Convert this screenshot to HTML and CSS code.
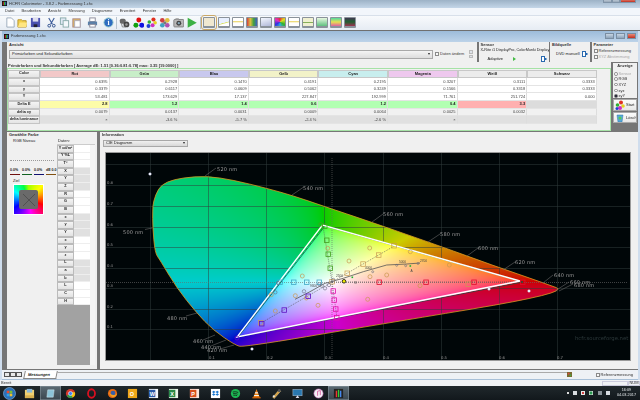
FILE: index.html
```html
<!DOCTYPE html>
<html lang="de">
<head>
<meta charset="utf-8">
<title>HCFR Colorimeter</title>
<link rel="stylesheet" href="styles.css">
</head>
<body>
<div class="app">
  <header class="titlebar">
    <svg class="appicon" viewBox="0 0 6 6"><rect width="6" height="6" fill="#111"/><rect x="1" y="1" width="1" height="4" fill="#e33"/><rect x="2.5" y="1" width="1" height="4" fill="#3c3"/><rect x="4" y="1" width="1" height="4" fill="#48e"/></svg>
    <span class="titletext">HCFR Colorimeter - 3.8.2 - Farbmessung 1.chc</span>
    <div class="winctl"><i class="wb"></i><i class="wb"></i><i class="wb close"></i></div>
  </header>
  <nav class="menubar">
    <span>Datei</span><span>Bearbeiten</span><span>Ansicht</span><span>Messung</span><span>Diagramme</span><span>Erweitert</span><span>Fenster</span><span>Hilfe</span>
  </nav>
  <div class="toolbar">
    <svg class="tool" viewBox="0 0 12 12"><path d="M2 1h5l3 3v7H2z" fill="#fff" stroke="#9ab"/></svg>
    <svg class="tool" viewBox="0 0 12 12"><path d="M1 3h4l1 1h4v7H1z" fill="#f2cf4a" stroke="#b8942a"/><path d="M3 6h8l-1 5H1z" fill="#ffe680"/></svg>
    <svg class="tool" viewBox="0 0 12 12"><path d="M1 1h10v10H1z" fill="#4a50b0"/><path d="M3 1h6v4H3z" fill="#dde"/><path d="M4 8h4v3H4z" fill="#223"/></svg>
    <svg class="tool gapl" viewBox="0 0 12 12"><path d="M3 1l4 7M9 1L5 8" stroke="#3a5a9a" stroke-width="1.2" fill="none"/><circle cx="3.5" cy="9.5" r="1.5" fill="none" stroke="#2a4a8a"/><circle cx="8.5" cy="9.5" r="1.5" fill="none" stroke="#2a4a8a"/></svg>
    <svg class="tool" viewBox="0 0 12 12"><rect x="1.5" y="1" width="6" height="7" fill="#dfe8f4" stroke="#8aa"/><rect x="4.5" y="4" width="6" height="7" fill="#f4f8fc" stroke="#8aa"/></svg>
    <svg class="tool" viewBox="0 0 12 12"><rect x="2" y="2" width="8" height="9" fill="#e0b860" stroke="#a88"/><rect x="4" y="4" width="6" height="7" fill="#fff" stroke="#aab"/></svg>
    <svg class="tool gapl" viewBox="0 0 12 12"><rect x="3" y="1" width="6" height="4" fill="#fff" stroke="#889"/><rect x="1" y="5" width="10" height="4" fill="#5a7fa8"/><rect x="3" y="8" width="6" height="3" fill="#fff" stroke="#889"/></svg>
    <svg class="tool gapl" viewBox="0 0 12 12"><circle cx="6" cy="6" r="5" fill="#2e6cc0" stroke="#9cc"/><text x="6" y="9" class="helpq">i</text></svg>
    <i class="sep"></i>
    <svg class="tool big" viewBox="0 0 14 14"><rect x="1" y="2" width="7" height="6" rx="2" fill="#666"/><circle cx="9" cy="9" r="3.5" fill="#444"/><circle cx="9" cy="9" r="1.5" fill="#999"/><path d="M3 8l1 4h4" fill="none" stroke="#777"/></svg>
    <svg class="tool big" viewBox="0 0 14 14"><circle cx="7" cy="3.5" r="3" fill="#e01010"/><circle cx="3.5" cy="10" r="3" fill="#10a010"/><circle cx="10.5" cy="10" r="3" fill="#1010e0"/></svg>
    <svg class="tool big" viewBox="0 0 14 14"><circle cx="9" cy="3" r="2.5" fill="#e03020"/><circle cx="11" cy="7" r="2.2" fill="#e8d020"/><circle cx="4" cy="6" r="2.2" fill="#30b030"/><circle cx="8" cy="10" r="2.4" fill="#d030c0"/><circle cx="3" cy="11" r="2.4" fill="#2040d0"/></svg>
    <svg class="tool big" viewBox="0 0 14 14"><circle cx="4" cy="4" r="2.8" fill="#d04040"/><circle cx="10" cy="4" r="2.8" fill="#e0c040"/><circle cx="4" cy="10" r="2.8" fill="#40a0c0"/><circle cx="10" cy="10" r="2.8" fill="#b050b0"/><circle cx="7" cy="7" r="2" fill="#7a7a7a"/></svg>
    <svg class="tool big" viewBox="0 0 14 14"><rect x="1" y="3" width="12" height="9" rx="1" fill="#b8b8b8" stroke="#777"/><circle cx="7" cy="7.5" r="3" fill="#444"/><circle cx="7" cy="7.5" r="1.4" fill="#8ab"/><rect x="3" y="1.5" width="4" height="2" fill="#999"/></svg>
    <svg class="tool big" viewBox="0 0 14 14"><path d="M2 1l11 6-11 6z" fill="#3cb043"/></svg>
    <i class="sep"></i>
    <div class="mon active s1"></div><div class="mon s2"></div><div class="mon s3"></div><div class="mon s4"></div><div class="mon s5"></div><div class="mon s6"></div><div class="mon s3"></div><div class="mon s7"></div><div class="mon s8"></div><div class="mon s9"></div><div class="mon s10"></div>
  </div>

  <main class="mdi">
    <div class="childtitle">
      <svg class="appicon" viewBox="0 0 6 6"><rect width="6" height="6" fill="#111"/><rect x="1" y="1" width="1" height="4" fill="#e33"/><rect x="2.5" y="1" width="1" height="4" fill="#3c3"/><rect x="4" y="1" width="1" height="4" fill="#48e"/></svg>
      <span>Farbmessung 1.chc</span>
      <div class="childctl"><i></i><i></i><i class="close"></i></div>
    </div>
    <div class="childbody">
      <section class="toprow">
        <div class="group ansicht">
          <b class="ghead">Ansicht</b>
          <div class="ansichtrow">
            <div class="combo wide"><span>Primärfarben und Sekundärfarben</span><i class="arrow"></i></div>
            <label class="chk"><i class="box"></i>Daten ändern</label>
            <div class="spin"><i></i><i></i></div>
          </div>
        </div>
        <div class="group sensor">
          <b class="ghead">Sensor</b>
          <div class="sline">X-Rite i1 DisplayPro, ColorMunki Display</div>
          <div class="sline2"><span>Adaptive</span><i class="play"></i><svg class="doc" viewBox="0 0 6 6"><rect x="0.5" y="0.5" width="3" height="5" fill="#fff" stroke="#2a6ab0"/><path d="M3.5 2h2v2h-2z" fill="#2a6ab0"/></svg></div>
        </div>
        <div class="group quelle">
          <b class="ghead">Bildquelle</b>
          <div class="sline3"><span>DVD manuell</span><svg class="doc" viewBox="0 0 6 6"><rect x="0.5" y="0.5" width="3" height="5" fill="#fff" stroke="#2a6ab0"/><path d="M3.5 2h2v2h-2z" fill="#2a6ab0"/></svg></div>
        </div>
        <div class="group param">
          <b class="ghead">Parameter</b>
          <label class="chk p1"><i class="box"></i>Referenzmessung</label>
          <label class="chk p2"><i class="box"></i>XYZ Abstimmung</label>
        </div>
      </section>

      <section class="midrow">
        <div class="tablepanel">
          <div class="tphead"><b>Primärfarben und Sekundärfarben [ Average dE: 1.51 [0.36:0.81:0.78] max: 3.35 [19.0000] ]</b></div>
          <div class="greenbox">
            <div class="gridwrap">
              <div class="grid">
                <div class="rh">Color</div><div class="ch rot">Rot</div><div class="ch gruen">Grün</div><div class="ch blau">Blau</div><div class="ch gelb">Gelb</div><div class="ch cyan">Cyan</div><div class="ch magenta">Magenta</div><div class="ch">Weiß</div><div class="ch">Schwarz</div>
                <div class="rh">x</div><div class="c">0.6395</div><div class="c">0.2928</div><div class="c">0.1470</div><div class="c">0.4191</div><div class="c">0.2195</div><div class="c">0.3207</div><div class="c">0.3111</div><div class="c">0.3333</div>
                <div class="rh">y</div><div class="c">0.3379</div><div class="c">0.6117</div><div class="c">0.0609</div><div class="c">0.5062</div><div class="c">0.3249</div><div class="c">0.1566</div><div class="c">0.3318</div><div class="c">0.3333</div>
                <div class="rh">Y</div><div class="c">53.481</div><div class="c">173.629</div><div class="c">17.137</div><div class="c">227.847</div><div class="c">192.999</div><div class="c">71.761</div><div class="c">251.724</div><div class="c">0.000</div>
                <div class="rh">Delta E</div><div class="c de dy">2.8</div><div class="c de dg">1.2</div><div class="c de dg">1.4</div><div class="c de dg">0.6</div><div class="c de dg">1.2</div><div class="c de dg">0.4</div><div class="c de dr">3.3</div><div class="c de dn"></div>
                <div class="rh">delta xy</div><div class="c l1">0.0079</div><div class="c l1">0.0137</div><div class="c l1">0.0031</div><div class="c l1">0.0009</div><div class="c l1">0.0064</div><div class="c l1">0.0025</div><div class="c l1">0.0032</div><div class="c l1"></div>
                <div class="rh">delta luminance</div><div class="c l2">×</div><div class="c l2">-3.6 %</div><div class="c l2">-5.7 %</div><div class="c l2">-2.4 %</div><div class="c l2">-2.6 %</div><div class="c l2">×</div><div class="c l2"></div><div class="c l2"></div>
              </div>
              <div class="vscroll"></div>
            </div>
            <div class="hscroll"></div>
          </div>
        </div>
        <aside class="anzeige">
          <div class="anzbox">
            <b class="ghead ctr">Anzeige</b>
            <label class="rad dis"><i></i>Sensor</label>
            <label class="rad"><i></i>RGB</label>
            <label class="rad"><i></i>XYZ</label>
            <label class="rad g2"><i></i>xyz</label>
            <label class="rad on"><i></i>xyY</label>
          </div>
          <div class="abtn"><svg class="abi" viewBox="0 0 10 10"><circle cx="6" cy="2.5" r="2" fill="#e03020"/><circle cx="8" cy="6" r="1.8" fill="#e8d020"/><circle cx="2.5" cy="5" r="1.8" fill="#30b030"/><circle cx="5" cy="8" r="2" fill="#d030c0"/><circle cx="2" cy="8.5" r="1.5" fill="#2040d0"/></svg><span>Start</span></div>
          <div class="abtn"><svg class="abi" viewBox="0 0 10 10"><path d="M2 2h6l-1 7H3z" fill="#58a8d8" stroke="#2a78a8" stroke-width=".5"/><circle cx="5" cy="5" r="1.6" fill="#5c5"/></svg><span>Löschen</span></div>
        </aside>
      </section>

      <section class="lowrow">
        <div class="gewaehlt">
          <b class="ghead">Gewählte Farbe</b>
          <div class="gbody">
            <div class="gleft">
              <div class="rgbn">RGB Niveau</div>
              <div class="dotline"></div>
              <div class="pcts"><span class="pr">0.0%</span><span class="pg">0.0%</span><span class="pb">0.0%</span><span class="po">dE 0.0</span></div>
              <div class="ziel">Ziel</div>
              <div class="swatch"><div class="swinner"><svg viewBox="0 0 16 16"><path d="M2 2l12 12M14 2L2 14" stroke="#4a4a4a" stroke-width=".8"/></svg></div></div>
            </div>
            <div class="gdata">
              <div class="dlabel">Daten:</div>
              <div class="dwrap">
                <div class="dcol">
                  <div class="dgrid">
                    <div class="dh">Y cd/m²</div><div class="dv"></div><div class="dh">Y %L</div><div class="dv"></div><div class="dh">T°</div><div class="dv"></div>
                    <div class="dh">X</div><div class="dv g"></div><div class="dh">Y</div><div class="dv g"></div><div class="dh">Z</div><div class="dv g"></div>
                    <div class="dh">R</div><div class="dv"></div><div class="dh">G</div><div class="dv"></div><div class="dh">B</div><div class="dv"></div>
                    <div class="dh">x</div><div class="dv g"></div><div class="dh">y</div><div class="dv g"></div><div class="dh">Y</div><div class="dv g"></div>
                    <div class="dh">x</div><div class="dv"></div><div class="dh">y</div><div class="dv"></div><div class="dh">z</div><div class="dv"></div>
                    <div class="dh">L</div><div class="dv g"></div><div class="dh">a</div><div class="dv g"></div><div class="dh">b</div><div class="dv g"></div>
                    <div class="dh">L</div><div class="dv"></div><div class="dh">C</div><div class="dv"></div><div class="dh">H</div><div class="dv"></div>
                  </div>
                  <div class="dfill"></div>
                </div>
                <div class="dscroll"></div>
              </div>
            </div>
          </div>
        </div>
        <div class="info">
          <b class="ghead">Information</b>
          <div class="combo cie"><span>CIE Diagramm</span><i class="arrow"></i></div>
          <div class="chart">
            <canvas id="cie" width="524" height="207"></canvas>
            <svg class="overlay" viewBox="106 153 524 207">
              <g class="lead">
                <path d="M205 176l11-8M292 195l11-7.500M372 222l11-8M428 242l12-8M467 256l11-8M503 270l12-8M543 283l10-8M555 291l14-9M559 291l14-7M152 228l-7 1.500M197 313l-11 3M215 335l-12 5M226 340l-15 6M234 345l-14 4"/>
              </g>
              <g class="nm">
                <text x="217" y="170.500">520 nm</text><text x="303" y="189.500">540 nm</text><text x="383" y="216">560 nm</text><text x="440" y="236">580 nm</text><text x="478" y="250">600 nm</text><text x="515" y="264">620 nm</text><text x="554" y="277">640 nm</text><text x="570" y="284">660 nm</text><text x="574" y="286.500">680 nm</text>
                <text x="123" y="234">500 nm</text><text x="167" y="320">480 nm</text><text x="193" y="343">460 nm</text><text x="201" y="349">440 nm</text><text x="207" y="351.500">420 nm</text>
              </g>
              <g class="ax">
                <text x="107" y="184">0.8</text><text x="107" y="205">0.7</text><text x="107" y="226">0.6</text><text x="107" y="246">0.5</text><text x="107" y="267">0.4</text><text x="107" y="287">0.3</text><text x="107" y="308">0.2</text><text x="107" y="328">0.1</text>
                <text x="209" y="359">0.1</text><text x="267" y="359">0.2</text><text x="325" y="359">0.3</text><text x="383" y="359">0.4</text><text x="441" y="359">0.5</text><text x="499" y="359">0.6</text><text x="557" y="359">0.7</text>
              </g>
              <path class="dots light" d="M106 282.500H628M332 158V360"/>
              <path class="dots" d="M332 282L323 226M332 282L261 323M332 282L396 245M332 282L337 318M332 282L523 282"/>
              <path class="meas" d="M325 226L238 337L523 282Z"/>
              <path class="target" d="M322.500 225L237 337L520 281Z"/>
              <path class="locus" d="M295 299.300L310 291.700L325 283.300L343.300 278.300L363.300 271.700L386.700 265L406.700 264L420 263"/>
              <g class="tan">
                <circle cx="327.700" cy="248.300" r="2"/><circle cx="275.300" cy="311" r="2"/><circle cx="306.300" cy="298" r="2"/><circle cx="295.300" cy="295.700" r="2"/><circle cx="271.300" cy="294.700" r="2"/><circle cx="318" cy="305.300" r="2"/><circle cx="302.300" cy="276" r="2"/><circle cx="369.700" cy="248" r="2"/><circle cx="349" cy="261" r="2"/><circle cx="410.300" cy="251.700" r="2"/><circle cx="386.700" cy="275" r="2"/><circle cx="370" cy="276.700" r="2"/><circle cx="367.700" cy="299.300" r="2"/><circle cx="420" cy="285.700" r="2"/><circle cx="449.300" cy="265" r="2"/>
                <rect x="258.500" y="320.500" width="4.500" height="4.500"/><rect x="391.800" y="243.500" width="4.500" height="4.500"/><rect x="376.500" y="252.800" width="4.500" height="4.500"/><rect x="360.800" y="261.800" width="4.500" height="4.500"/><rect x="345" y="271" width="4.500" height="4.500"/><rect x="329.800" y="279.500" width="4.500" height="4.500"/><rect x="466" y="282" width="4.500" height="4.500"/>
              </g>
              <g class="sq grn"><rect x="324.500" y="238" width="4.500" height="4.500"/><rect x="326" y="252" width="4.500" height="4.500"/><rect x="328" y="266" width="4.500" height="4.500"/><rect x="322.500" y="224" width="4.500" height="4.500"/><circle cx="320.700" cy="224.300" r="1.800"/></g>
              <g class="sq cyn"><rect x="277.800" y="280" width="4.500" height="4.500"/><rect x="291.500" y="280" width="4.500" height="4.500"/><rect x="304.500" y="280" width="4.500" height="4.500"/><rect x="317" y="280" width="4.500" height="4.500"/></g>
              <g class="sq pur"><rect x="259.500" y="321.500" width="4.500" height="4.500"/><rect x="282" y="307.800" width="4.500" height="4.500"/><rect x="306" y="294" width="4.500" height="4.500"/><circle cx="237" cy="338" r="2"/></g>
              <g class="sq mag"><rect x="331" y="288.800" width="4.500" height="4.500"/><rect x="332" y="297.800" width="4.500" height="4.500"/><rect x="333.500" y="306.800" width="4.500" height="4.500"/><rect x="334.500" y="315.500" width="4.500" height="4.500"/></g>
              <g class="sq red"><rect x="377" y="280" width="4.500" height="4.500"/><rect x="423.800" y="280" width="4.500" height="4.500"/><rect x="471.800" y="280" width="4.500" height="4.500"/><rect x="520.500" y="280" width="4.500" height="4.500"/></g>
              <g class="gc"><circle cx="278" cy="283" r="1.700"/><circle cx="275.300" cy="292.300" r="1.700"/><circle cx="304" cy="291.300" r="1.700"/><circle cx="319.300" cy="284.300" r="1.700"/><circle cx="321.800" cy="285.700" r="1.700"/><circle cx="325" cy="288.300" r="1.700"/><circle cx="329" cy="285" r="1.700"/><circle cx="333.300" cy="280" r="1.700"/><circle cx="372.700" cy="271.700" r="1"/><circle cx="396.700" cy="265.300" r="1"/><circle cx="405.700" cy="265.700" r="1"/><circle cx="418" cy="263.500" r="1"/></g>
              <circle class="yel" cx="344" cy="281.300" r="1.800"/>
              <rect class="gd" x="351.500" y="276.500" width="1.600" height="1.600"/><rect class="gd" x="409.500" y="265.200" width="1.600" height="1.600"/>
              <g class="wt"><circle cx="150" cy="174" r="1.300"/><circle cx="252" cy="349" r="1.300"/><circle cx="489" cy="289" r="1.300"/><circle cx="529" cy="291" r="1.300"/></g>
              <g class="kt"><text x="310" y="287">9300</text><text x="336" y="277">2500</text><text x="365" y="269">4000</text><text x="399" y="263">5000</text><text x="420" y="262">2700</text><text x="410.500" y="272">A</text><text x="354.500" y="283.500">B</text></g>
              <text class="mark" x="575" y="340">hcfr.sourceforge.net</text>
            </svg>
          </div>
        </div>
      </section>
    </div>
    <div class="tabrow">
      <div class="tnav"><i></i><i></i><i></i></div>
      <div class="tab">Messungen</div>
      <div class="tabrest"></div>
      <svg class="tinyicon" viewBox="0 0 6 6"><rect width="6" height="6" fill="#7a6a30"/><rect x="1" y="1" width="2" height="2" fill="#d44"/><rect x="3" y="3" width="2" height="2" fill="#4a4"/></svg>
      <label class="chk tchk"><i class="box"></i>Referenzmessung</label>
    </div>
  </main>

  <footer class="statusbar"><span>Bereit</span><span class="cell blank"></span><span class="cell">NUM</span></footer>

  <div class="taskbar">
    <div class="start"><svg viewBox="0 0 14 14"><circle cx="7" cy="7" r="6.500" fill="#2a70b8" stroke="#9cc4e8" stroke-width=".6"/><rect x="4" y="4" width="2.800" height="2.800" fill="#e84a30"/><rect x="7.200" y="4" width="2.800" height="2.800" fill="#7ac030"/><rect x="4" y="7.200" width="2.800" height="2.800" fill="#30a0e8"/><rect x="7.200" y="7.200" width="2.800" height="2.800" fill="#f0c030"/></svg></div>
    <div class="ti"><svg viewBox="0 0 12 12"><rect x="1" y="2" width="10" height="9" fill="#f0d070"/><rect x="3" y="1" width="6" height="4" fill="#8ab8d8"/><rect x="1" y="8" width="10" height="3" fill="#d8b050"/></svg></div>
    <div class="ti act"><svg viewBox="0 0 12 12"><path d="M3 2h7l-1 8H2z" fill="#8cc4d8" stroke="#d8e8f0" stroke-width=".5"/></svg></div>
    <div class="ti"><svg viewBox="0 0 12 12"><circle cx="6" cy="6" r="5" fill="#d8392b"/><path d="M6 6L1.700 8.500A5 5 0 0 0 8.500 10.300z" fill="#2e9e4a"/><path d="M6 6l2.500 4.300A5 5 0 0 0 10.800 4.500H6z" fill="#f4c20d"/><circle cx="6" cy="6" r="2.200" fill="#4285f4" stroke="#fff" stroke-width=".6"/></svg></div>
    <div class="ti"><svg viewBox="0 0 12 12"><ellipse cx="6" cy="6" rx="3.800" ry="4.600" fill="none" stroke="#d81020" stroke-width="2"/></svg></div>
    <div class="ti"><svg viewBox="0 0 12 12"><circle cx="6" cy="6" r="5" fill="#e86a14"/><circle cx="6.500" cy="5.500" r="2.600" fill="#3a5fa8"/><path d="M2 3c1 5 6 6 9 3-1 5-8 6-9-3z" fill="#f4a020"/></svg></div>
    <div class="ti"><svg viewBox="0 0 12 12"><rect x="1" y="1" width="10" height="10" fill="#f0a818"/><text x="3" y="9" class="tl">O</text></svg></div>
    <div class="ti"><svg viewBox="0 0 12 12"><rect x="1" y="1" width="10" height="10" fill="#f4f8fc"/><rect x="1" y="2" width="7" height="8" fill="#2a5aa8"/><text x="2" y="8.500" class="tl">W</text></svg></div>
    <div class="ti"><svg viewBox="0 0 12 12"><rect x="1" y="1" width="10" height="10" fill="#e8f4e8"/><rect x="1" y="2" width="7" height="8" fill="#2a8a48"/><text x="2.500" y="8.500" class="tl">X</text></svg></div>
    <div class="ti"><svg viewBox="0 0 12 12"><rect x="1" y="1" width="10" height="10" fill="#fbe4dc"/><rect x="1" y="2" width="7" height="8" fill="#d8501e"/><text x="2.500" y="8.500" class="tl">P</text></svg></div>
    <div class="ti"><svg viewBox="0 0 12 12"><rect x="1" y="1" width="10" height="10" fill="#fff"/><path d="M4 3l2 1.300L4 5.600 2.200 4.300zM8 3l1.800 1.300L8 5.600 6 4.300zM4 5.800l2 1.300-2 1.300-1.800-1.300zM8 5.800l1.800 1.300L8 8.400 6 7.100z" fill="#1a78d0"/></svg></div>
    <div class="ti"><svg viewBox="0 0 12 12"><circle cx="6" cy="6" r="5" fill="#1db954"/><path d="M3 4.500c2-.7 4-.5 6 .5M3.300 6.300c1.800-.5 3.400-.3 5 .5M3.700 8c1.400-.4 2.800-.2 4 .4" stroke="#111" stroke-width=".8" fill="none"/></svg></div>
    <div class="ti"><svg viewBox="0 0 12 12"><path d="M6 1l3.500 9h-7z" fill="#f08010"/><path d="M4.600 4.500h2.800l.5 1.500H4.100zM3.600 7.500h4.800l.5 1.300H3.100z" fill="#f4f4f4"/><rect x="1.500" y="10" width="9" height="1.300" fill="#e06808"/></svg></div>
    <div class="ti"><svg viewBox="0 0 12 12"><path d="M2 10l7-8 1.500 1.500-7 8z" fill="#d8a040" stroke="#f4e0a0" stroke-width=".5"/><circle cx="9" cy="3" r="1.600" fill="#555"/><circle cx="3" cy="9" r="1.200" fill="#e8e8e8"/></svg></div>
    <div class="ti"><svg viewBox="0 0 12 12"><rect x="1" y="1.500" width="10" height="7" fill="#2a78b0" stroke="#bcd" stroke-width=".5"/><path d="M4 11l2-3 2 3z" fill="#dde"/></svg></div>
    <div class="ti"><svg viewBox="0 0 12 12"><circle cx="6" cy="6" r="5" fill="#f4f0f4" stroke="#d070c0" stroke-width=".6"/><path d="M5 8.500V3.500l3-.7v5" fill="none" stroke="#d04090" stroke-width=".8"/></svg></div>
    <div class="ti act"><svg viewBox="0 0 12 12"><rect x="1" y="1" width="10" height="10" fill="#222"/><rect x="3" y="3" width="1.500" height="7" fill="#e33"/><rect x="5.300" y="2" width="1.500" height="8" fill="#3c3"/><rect x="7.600" y="3" width="1.500" height="7" fill="#48e"/></svg></div>
    <div class="tray">
      <i class="tr up"></i><i class="tr wh"></i><i class="tr rd"></i><i class="tr gn"></i><i class="tr gy"></i><i class="tr wh"></i>
      <div class="clock"><span>16:09</span><span>04.03.2017</span></div>
    </div>
  </div>
</div>
<script src="chart.js"></script>
</body>
</html>
```

FILE: styles.css
```css
* { box-sizing: border-box; }
html, body { margin: 0; padding: 0; }
body { width: 640px; height: 400px; overflow: hidden; font: 4px/1 "Liberation Sans", Arial, sans-serif; color: #222; background: #fff; }
i { display: block; font-style: normal; }
.app { width: 640px; height: 400px; display: flex; flex-direction: column; filter: blur(.3px); }

.titlebar { height: 8px; flex: none; display: flex; align-items: center; gap: 2px; padding: 0 2px 1px; background: linear-gradient(#9db2c6, #c4d6e8); }
.appicon { width: 5px; height: 5px; flex: none; }
.titletext { color: #333; }
.winctl { margin-left: auto; margin-top: -2px; display: flex; align-self: flex-start; padding-right: 2px; }
.wb { width: 8.500px; height: 5px; background: linear-gradient(#c8d4e0, #98a8b8); border: .5px solid #8094a8; }
.wb.close { width: 16px; background: linear-gradient(#e89080, #c03020); }

.menubar { height: 6.500px; flex: none; display: flex; align-items: center; gap: 7.200px; padding-left: 5px; background: #f2f6fb; color: #333; }
.toolbar { height: 15.500px; flex: none; display: flex; align-items: center; gap: 1.800px; padding-left: 4.500px; background: linear-gradient(#f8fafc, #e6ecf3); border-top: .5px solid #d8e0ea; }
.tool { width: 11px; height: 11px; flex: none; }
.tool.big { width: 11.600px; height: 11.600px; }
.tool.gapl { margin-left: 3px; }
.helpq { font: bold 8px "Liberation Serif", serif; fill: #fff; text-anchor: middle; }
.sep { width: 1px; height: 12px; background: #b8c4d0; margin: 0 .3px; }
.mon { width: 12.200px; height: 11px; flex: none; border: 1px solid #8a929a; border-bottom-width: 2px; border-radius: 1px; background: #fff; }
.mon.active { outline: 1px solid #c9a868; outline-offset: 1px; background: #f0e8d0; margin-right: 1px; }
.s1 { background: linear-gradient(135deg, #e8e8e0, #c8c0a0); }
.s2 { background: linear-gradient(165deg, #e8f0ff 55%, #d8e060 60%, #fff 70%); }
.s3 { background: linear-gradient(#fff 40%, #e8d050 45%, #fff 60%); }
.s4 { background: linear-gradient(90deg, #d04040, #e0c040, #40a040, #4060c0); }
.s5 { background: linear-gradient(165deg, #f4f8ff, #b0b8d8); }
.s6 { background: conic-gradient(#e03030, #e0e020, #30b030, #30b0e0, #3030e0, #e030c0, #e03030); }
.s7 { background: linear-gradient(#f0f0d0 50%, #70a040 55%, #f0f0d0 62%); }
.s8 { background: linear-gradient(#e8f8e0, #60c080); }
.s9 { background: linear-gradient(#50d8a0, #e8e050, #e060a0); }
.s10 { background: linear-gradient(#f070d0, #f4b0c0, #e8e060); }
.mon:last-child { background: linear-gradient(#403850, #206030, #a03050); }

.mdi { flex: 1; min-height: 0; display: flex; flex-direction: column; padding: 0 2px; background: #cfdded; border-top: 1px solid #6f6f6f; }
.childtitle { height: 10.500px; flex: none; display: flex; align-items: center; gap: 2px; padding-left: 2px; background: linear-gradient(#9cbbd9, #bdd3e9); color: #333; }
.childctl { margin-left: auto; display: flex; gap: 1.500px; padding-right: 2px; }
.childctl i { width: 9.500px; height: 6px; background: linear-gradient(#c8d6e4, #8ea4ba); border: .5px solid #7a8ea2; }
.childctl i.close { background: linear-gradient(#e88a78, #c03020); }

.childbody { flex: 1; min-height: 0; display: flex; flex-direction: column; gap: .8px; padding: .5px 0 1px 5px; background: #767676; }
.group { background: #f0f0f0; padding: 1.200px 2px 0; position: relative; }
.ghead { display: block; font-size: 4px; color: #333; }
.toprow { height: 19.500px; flex: none; display: flex; gap: 1.500px; padding-right: .5px; }
.ansicht { flex: 1; }
.ansichtrow { display: flex; align-items: center; gap: 2px; margin-top: 2.500px; }
.combo { height: 8px; display: flex; align-items: center; justify-content: space-between; padding: 0 2px; background: linear-gradient(#f4f4f4, #dcdcdc); border: .5px solid #a8a8a8; }
.combo.wide { width: 424px; height: 9px; }
.arrow { width: 0; height: 0; border: 1.500px solid transparent; border-top: 2px solid #222; border-bottom: 0; }
.chk { display: flex; align-items: center; gap: 1px; white-space: nowrap; color: #333; }
.box { width: 4px; height: 4px; background: #f8f8f8; border: .5px solid #8a8a8a; flex: none; }
.spin { margin-left: 3px; width: 4px; display: flex; flex-direction: column; gap: 1px; }
.spin i { height: 3.500px; background: #dfe3ea; border: .3px solid #bbb; }
.sensor { width: 70px; }
.sline { margin-top: 2px; white-space: nowrap; font-size: 3.800px; }
.sline2 { display: flex; align-items: center; margin-top: 3px; padding-left: 7px; }
.play { width: 0; height: 0; margin-left: 10px; border: 2px solid transparent; border-left: 3.500px solid #44bb44; border-right: 0; }
.doc { width: 6px; height: 6px; margin-left: auto; }
.quelle { width: 40px; }
.sline3 { display: flex; align-items: center; margin-top: 4px; padding-left: 4px; }
.param { width: 46px; }
.p1 { margin-top: 1.800px; }
.p2 { margin-top: 1.800px; color: #a8a8a8; }

.midrow { height: 68.500px; flex: none; display: flex; gap: 1px; }
.tablepanel { flex: 1; background: #f4f4f4; display: flex; flex-direction: column; }
.tphead { height: 6px; flex: none; padding: 1.500px 0 0 1px; background: #f0f0f0; }
.tphead b { color: #333; }
.greenbox { flex: 1; display: flex; flex-direction: column; padding-top: 1px; border: 1px solid #a6e2a6; background: #f2f2f2; }
.gridwrap { display: flex; }
.grid { width: 589px; display: grid; grid-template-columns: 32px repeat(8, 69.600px); grid-template-rows: 8px repeat(3, 7.500px) 8px 7.500px 8px; }
.vscroll { flex: 1; background: #f0f0f0; }
.hscroll { flex: 1; background: #f0f0f0; }
.rh { display: flex; align-items: center; justify-content: center; font-weight: bold; background: linear-gradient(#f4f4f4, #e4e4e4); border: .4px solid #c4c4c4; white-space: nowrap; font-size: 3.800px; }
.ch { display: flex; align-items: center; justify-content: center; font-weight: bold; background: #ececec; border: .4px solid #c8c8c8; }
.rot { background: #f2c8c8; } .gruen { background: #c8eec8; } .blau { background: #c8c8ee; } .gelb { background: #f2f2c8; } .cyan { background: #c8eeee; } .magenta { background: #eec8ee; }
.c { display: flex; align-items: center; justify-content: flex-end; padding-right: 1px; background: #fff; border-right: .4px solid #ddd; border-bottom: .4px solid #e4e4e4; color: #444; }
.de { font-weight: bold; color: #222; }
.dy { background: #fdfca8; } .dg { background: #b2ffb2; } .dr { background: #ffb0b0; } .dn { background: #dcdcdc; }
.l1 { background: #f1f1f1; } .l2 { background: #e0e0e0; }

.anzeige { width: 26px; flex: none; display: flex; flex-direction: column; gap: 1px; padding: .5px 1px 0 1px; }
.anzbox { height: 35px; background: #f0f0f0; padding: 1.500px 1px 0; margin-bottom: .5px; }
.ctr { text-align: center; margin-bottom: 3px; }
.rad { display: flex; align-items: center; gap: 1px; height: 5.300px; color: #333; }
.rad i { width: 3.500px; height: 3.500px; border-radius: 50%; background: #f8f8f8; border: .5px solid #888; }
.rad.dis { color: #aaa; }
.rad.g2 { margin-top: .8px; }
.rad.on i { background: #223; }
.abtn { height: 11.500px; display: flex; align-items: center; gap: 1px; padding-left: 1px; background: linear-gradient(#fbfbfb, #e8e8e8); border: .4px solid #aaa; white-space: nowrap; overflow: hidden; }
.abi { width: 10px; height: 10px; flex: none; }

.lowrow { flex: 1; min-height: 0; display: flex; gap: 3px; }
.gewaehlt { width: 90px; flex: none; background: #f0f0f0; padding: 1.300px 2px 0; display: flex; flex-direction: column; }
.gbody { flex: 1; min-height: 0; display: flex; }
.gleft { width: 48px; flex: none; padding-left: 4px; }
.rgbn { margin-top: 2.500px; }
.dotline { margin: 17px 3px 0 -3px; border-top: .6px dotted #999; }
.pcts { display: flex; gap: 2.500px; margin: 8px 0 0 -3px; white-space: nowrap; font-size: 3.600px; font-weight: bold; }
.pcts span { width: 9.500px; padding-bottom: 1px; }
.pr { border-bottom: 1px solid #701010; } .pg { border-bottom: 1px solid #106020; } .pb { border-bottom: 1px solid #101070; } .po { border-bottom: 1px solid #805010; }
.ziel { margin-top: 4.500px; }
.swatch { width: 31px; height: 31px; margin-top: 1px; border: 1px solid #fff; padding: 5px; background: conic-gradient(#a0ff00, #ffff00 45deg, #ff0000 110deg, #ff00ff 170deg, #0000ff 240deg, #00ffff 300deg, #00ff40 340deg, #a0ff00); }
.swinner { width: 19px; height: 19px; border-radius: 2px; background: #6a6a6a; padding: 1.500px; }
.swinner svg { display: block; width: 16px; height: 16px; }
.gdata { flex: 1; min-width: 0; display: flex; flex-direction: column; }
.dlabel { margin-top: 2.500px; height: 4px; margin-left: 1px; }
.dwrap { flex: 1; min-height: 0; display: flex; margin-bottom: 4px; border-top: .5px solid #ccc; margin-top: .5px; }
.dcol { width: 33px; display: flex; flex-direction: column; }
.dgrid { display: grid; grid-template-columns: 17px 16px; grid-auto-rows: 7.650px; }
.dh { display: flex; align-items: center; justify-content: center; font-weight: bold; background: linear-gradient(#f4f4f4, #e2e2e2); border: .4px solid #bbb; font-size: 3.800px; white-space: nowrap; }
.dv { background: #fff; border-bottom: .4px solid #eee; }
.dv.g { background: #e0e0e0; }
.dfill { flex: 1; background: #a2a2a2; }
.dscroll { flex: 1; background: #f4f4f4; }

.info { flex: 1; min-width: 0; background: #f0f0f0; padding: 1.300px 0 0 2px; display: flex; flex-direction: column; }
.combo.cie { width: 85px; height: 7.500px; margin: 2.800px 0 0 1px; background: linear-gradient(#f0f0f0, #d8d8d8); flex: none; }
.chart { position: relative; width: 524px; height: 207px; margin: 5.500px 0 0 4px; background: #000608; box-shadow: 0 0 0 1px #9a9a9a; flex: none; }
#cie { display: block; }
.overlay { position: absolute; left: 0; top: 0; width: 524px; height: 207px; }
.lead path { fill: none; stroke: #6a6a6a; stroke-width: .6; }
.nm text { font: 5px "DejaVu Sans", sans-serif; fill: #9c9c9c; letter-spacing: .2px; }
.ax text { font: 3.800px "DejaVu Sans", sans-serif; fill: #989898; }
.dots { fill: none; stroke: #4c4c4c; stroke-width: .6; stroke-dasharray: 1 1; }
.dots.light { stroke: #6a6a6a; }
.target { fill: none; stroke: #fff; stroke-width: 1.300; }
.meas { fill: none; stroke: #205040; stroke-width: .8; }
.locus { fill: none; stroke: #555; stroke-width: .8; }
.tan circle, .tan rect { fill: none; stroke: #c89a50; stroke-width: .7; }
.sq rect, .sq circle { fill: none; stroke-width: .8; }
.grn rect, .grn circle { stroke: #44a020; }
.cyn rect { stroke: #40a8c8; }
.pur rect, .pur circle { stroke: #6010c0; }
.mag rect { stroke: #e010a8; }
.red rect { stroke: #e01030; }
.gc circle { fill: none; stroke: #6a6a80; stroke-width: .6; }
.yel { fill: #f4f000; stroke: #111; stroke-width: .8; }
.gd { fill: #20b030; }
.wt circle { fill: #fff; stroke: #b0b8e0; stroke-width: .4; }
.kt text { font: 3.200px "Liberation Sans", sans-serif; fill: #444; }
.mark { font: 5.300px "DejaVu Sans", sans-serif; fill: #2c3a3c; }

.tabrow { height: 10px; flex: none; display: flex; align-items: center; padding: 0 2px 0 2px; background: #eef1f5; border-bottom: 1.500px solid #a8c0d8; }
.tnav { display: flex; gap: .5px; }
.tnav i { width: 5.500px; height: 5.500px; background: #e8e8e8; border: .5px solid #555; }
.tab { margin-left: 2px; padding: 1.500px 6px 1.500px 3px; font-weight: bold; background: #fff; border: .5px solid #888; border-top: 0; transform: skewX(-12deg); }
.tabrest { flex: 1; align-self: flex-start; height: 2px; border-top: .5px solid #aaa; margin-top: 1.500px; }
.tinyicon { width: 5px; height: 5px; margin-right: 24px; flex: none; }
.tchk { margin-right: 3px; }

.statusbar { height: 6px; flex: none; display: flex; align-items: center; gap: .5px; padding-left: 1px; background: #f0f2f5; color: #333; }
.cell { height: 5px; display: flex; align-items: center; justify-content: center; border: .4px solid #ccd; width: 12px; }
.cell.blank { margin-left: auto; width: 26px; }

.taskbar { height: 14px; flex: none; display: flex; align-items: center; background: linear-gradient(#20282c, #12181c); }
.start { width: 19.500px; height: 14px; flex: none; display: flex; align-items: center; justify-content: center; }
.start svg { width: 13px; height: 13px; }
.ti { width: 20.600px; height: 14px; flex: none; display: flex; align-items: center; justify-content: center; }
.ti svg { width: 11px; height: 11px; }
.ti.act { background: linear-gradient(#5a6a74, #3a464e); box-shadow: inset 0 0 0 .5px #8a98a0; }
.tl { font: bold 6px "Liberation Sans", sans-serif; fill: #fff; }
.tray { margin-left: auto; display: flex; align-items: center; gap: 4.200px; padding-right: 4px; }
.tr { width: 4px; height: 4px; }
.tr.up { width: 1.500px; height: 1.500px; background: #ddd; }
.tr.wh { background: #d8dce0; }
.tr.rd { background: #d04040; box-shadow: inset 0 0 0 1px #e8e8e8; }
.tr.gn { background: #2a9a50; box-shadow: inset 0 0 0 .6px #e8e8e8; }
.tr.gy { background: #8a9298; }
.clock { display: flex; flex-direction: column; align-items: center; gap: 1.200px; color: #e4e8ea; margin-left: 3px; font-size: 3.800px; }
```

FILE: chart.js
```js
(function () {
  var OX = 106, OY = 153, W = 524, H = 207;
  var canvas = document.getElementById('cie');
  var ctx = canvas.getContext('2d');

  // Spectral locus traced in page coordinates.
  var locus = [[152.7,226.7],[152.7,210],[153.3,201.7],[158.3,188.3],[166.7,181.7],[183,177.7],[206.7,176],[233,180],[266.7,188.3],[293,195.7],[323,206],[370,221.7],[441.7,246.7],[491.7,265],[543,282.7],[570,292.7],[370,326],[243.3,347.3],[235,345],[213,330],[196.7,313],[176.7,288],[160,260],[155,253]];
  var tri = [[322.5,225],[520,281],[237,337]];

  function loop(pts, smooth) {
    var p = new Path2D();
    var n = pts.length;
    if (!smooth) {
      p.moveTo(pts[0][0] - OX, pts[0][1] - OY);
      for (var k = 1; k < n; k++) p.lineTo(pts[k][0] - OX, pts[k][1] - OY);
      p.closePath();
      return p;
    }
    var mx = (pts[n - 1][0] + pts[0][0]) / 2 - OX, my = (pts[n - 1][1] + pts[0][1]) / 2 - OY;
    p.moveTo(mx, my);
    for (var i = 0; i < n; i++) {
      var a = pts[i], b = pts[(i + 1) % n];
      p.quadraticCurveTo(a[0] - OX, a[1] - OY, (a[0] + b[0]) / 2 - OX, (a[1] + b[1]) / 2 - OY);
    }
    p.closePath();
    return p;
  }

  // Colour of a chromaticity coordinate. Out-of-gamut values are desaturated
  // by shifting up to the gamut boundary, then dimmed.
  function colour(px, py) {
    var x = (px - 150) / 581, y = (349.6 - py) / 206;
    if (y < 0.002) y = 0.002;
    var X = x / y, Z = (1 - x - y) / y;
    var r = 3.2406 * X - 1.5372 - 0.4986 * Z;
    var g = -0.9689 * X + 1.8758 + 0.0415 * Z;
    var b = 0.0557 * X - 0.204 + 1.057 * Z;
    var low = Math.min(r, g, b), out = low < 0;
    if (out) { r -= low; g -= low; b -= low; }
    var m = Math.max(r, g, b) || 1;
    var e = out ? 1 / 1.5 : 1 / 3, f = out ? 0.8 : 1;
    return [Math.pow(r / m, e) * f * 255, Math.pow(g / m, e) * f * 255, Math.pow(b / m, e) * f * 255];
  }

  var off = document.createElement('canvas');
  off.width = W; off.height = H;
  var oc = off.getContext('2d');
  var img = oc.createImageData(W, H);
  for (var j = 0; j < H; j++) {
    for (var i = 0; i < W; i++) {
      var c = colour(i + OX + 0.5, j + OY + 0.5), q = (j * W + i) * 4;
      img.data[q] = c[0]; img.data[q + 1] = c[1]; img.data[q + 2] = c[2]; img.data[q + 3] = 255;
    }
  }
  oc.putImageData(img, 0, 0);

  ctx.fillStyle = '#000608';
  ctx.fillRect(0, 0, W, H);
  var shape = loop(locus, true);
  ctx.save(); ctx.clip(shape); ctx.drawImage(off, 0, 0); ctx.restore();

  // Grid over the outer region.
  ctx.strokeStyle = 'rgba(48,60,60,.5)';
  ctx.lineWidth = 1;
  var vs = [150, 208, 266, 324, 383, 441, 499, 557];
  var hs = [164, 185, 205.5, 226.5, 247, 267.7, 288, 308.5, 329];
  vs.forEach(function (v) { ctx.beginPath(); ctx.moveTo(v - OX + 0.5, 0); ctx.lineTo(v - OX + 0.5, H); ctx.stroke(); });
  hs.forEach(function (h) { ctx.beginPath(); ctx.moveTo(0, Math.round(h - OY) + 0.5); ctx.lineTo(W, Math.round(h - OY) + 0.5); ctx.stroke(); });

  // The sRGB triangle sits above the grid.
  ctx.save(); ctx.clip(loop(tri, false)); ctx.drawImage(off, 0, 0); ctx.restore();

  ctx.strokeStyle = '#d89a20';
  ctx.lineWidth = 0.8;
  ctx.stroke(shape);
})();
```
